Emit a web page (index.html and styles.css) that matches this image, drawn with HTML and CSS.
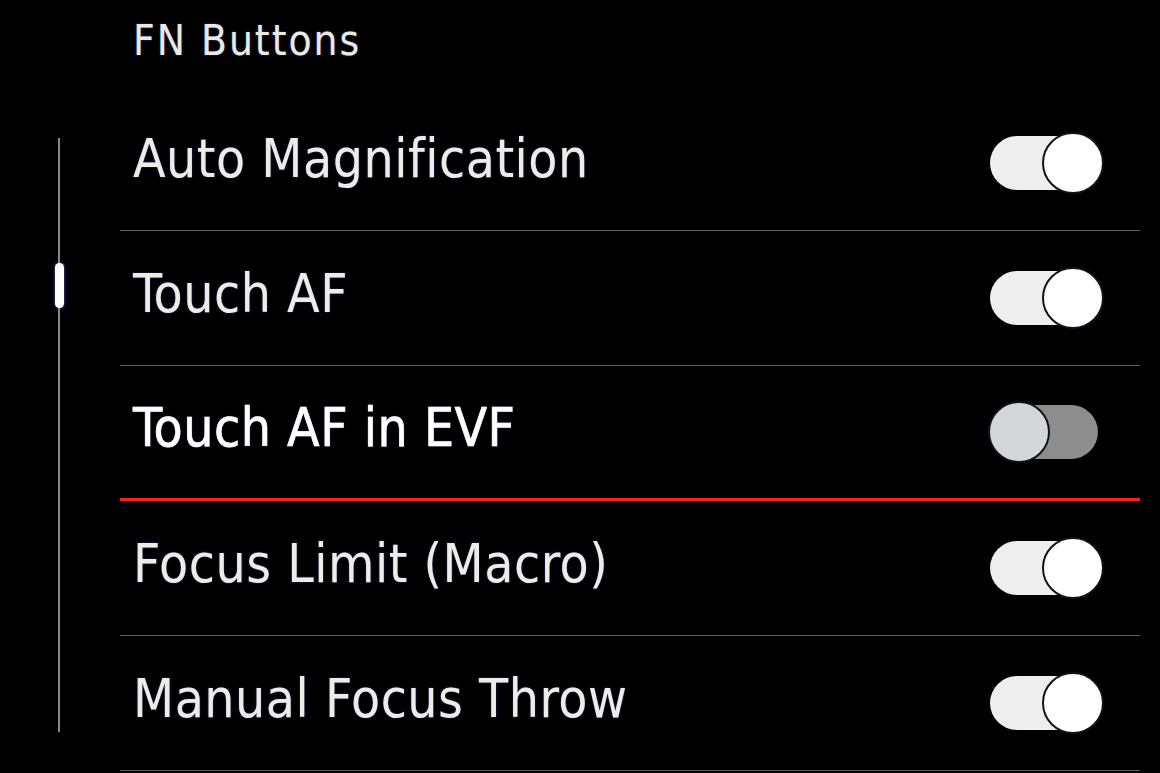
FILE: index.html
```html
<!DOCTYPE html>
<html lang="en">
<head>
<meta charset="utf-8">
<title>FN Buttons</title>
<link rel="stylesheet" href="styles.css">
</head>
<body>
<div class="screen">
  <div class="rail">
    <div class="rail-line"></div>
    <div class="rail-thumb"></div>
  </div>
  <div class="menu">
    <h1 class="title">FN Buttons</h1>
    <ul class="list">
      <li class="row">
        <span class="label">Auto Magnification</span>
        <span class="toggle on"><span class="track"></span><span class="knob"></span></span>
      </li>
      <li class="row">
        <span class="label">Touch AF</span>
        <span class="toggle on"><span class="track"></span><span class="knob"></span></span>
      </li>
      <li class="row selected">
        <span class="label">Touch AF in EVF</span>
        <span class="toggle off"><span class="track"></span><span class="knob"></span></span>
      </li>
      <li class="row">
        <span class="label">Focus Limit (Macro)</span>
        <span class="toggle on"><span class="track"></span><span class="knob"></span></span>
      </li>
      <li class="row">
        <span class="label">Manual Focus Throw</span>
        <span class="toggle on"><span class="track"></span><span class="knob"></span></span>
      </li>
    </ul>
  </div>
</div>
</body>
</html>
```

FILE: styles.css
```css
* { box-sizing: border-box; }

html, body {
  margin: 0;
  padding: 0;
  background: #000;
}

body {
  width: 1160px;
  height: 773px;
  overflow: hidden;
  font-family: "DejaVu Sans Condensed", "DejaVu Sans", sans-serif;
  font-stretch: condensed;
  color: #eceee6;
}

.screen {
  display: grid;
  grid-template-columns: 120px 1020px 20px;
  height: 773px;
}

.rail {
  position: relative;
  padding-top: 138px;
}

.rail-line {
  margin-left: 58px;
  width: 2px;
  height: 594px;
  background: #8a8a86;
}

.rail-thumb {
  position: absolute;
  left: 55px;
  top: 263px;
  width: 9px;
  height: 45px;
  border-radius: 5px;
  background: #ffffff;
  box-shadow: 0 0 3px rgba(90, 110, 255, 0.9);
}

.menu {
  display: flex;
  flex-direction: column;
}

.title {
  margin: 0;
  height: 96px;
  padding: 16px 0 0 13px;
  font-size: 42px;
  font-weight: normal;
  line-height: 50px;
  letter-spacing: 2px;
  color: #e9ebdc;
  text-shadow: 0 0 2px rgba(70, 80, 220, 0.8);
}

.list {
  list-style: none;
  margin: 0;
  padding: 0;
}

.row {
  display: flex;
  align-items: center;
  justify-content: space-between;
  height: 135px;
  padding: 0 36px 0 13px;
  border-bottom: 1px solid #5c5e5c;
}

.row.selected {
  border-bottom: 3px solid #f3251b;
}

.label {
  font-size: 53px;
  line-height: 64px;
  padding-bottom: 9px;
  letter-spacing: 0.5px;
  text-shadow: 0 0 2px rgba(90, 70, 200, 0.7);
}

.row.selected .label {
  color: #ffffff;
  -webkit-text-stroke: 0.6px #ffffff;
}

.toggle {
  position: relative;
  display: block;
  width: 116px;
  height: 62px;
}

.track {
  position: absolute;
  top: 4px;
  height: 54px;
  border-radius: 27px;
}

.knob {
  position: absolute;
  top: 0;
  width: 62px;
  height: 62px;
  border-radius: 50%;
  border: 2px solid #14101c;
}

.toggle.on .track {
  left: 2px;
  width: 100px;
  background: #eeeeee;
}

.toggle.on .knob {
  right: 0;
  background: #ffffff;
}

.toggle.off .track {
  right: 6px;
  width: 98px;
  background: #8d8d8d;
}

.toggle.off .knob {
  left: 0;
  background: #d3d7d9;
}
```
